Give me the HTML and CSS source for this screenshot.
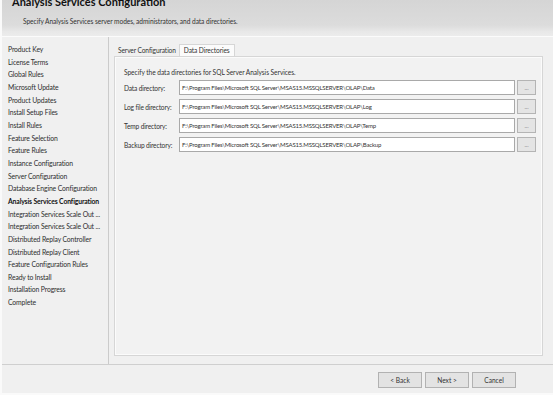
FILE: index.html
```html
<!DOCTYPE html>
<html lang="en">
<head>
  <meta charset="UTF-8" />
  <title>Analysis Services Configuration</title>
  <link rel="stylesheet" href="styles.css">
</head>
<body>
  <div class="window">
    <header class="header">
      <h1>Analysis Services Configuration</h1>
      <p>Specify Analysis Services server modes, administrators, and data directories.</p>
    </header>

    <div class="body">
      <nav class="steps">
        <div>Product Key</div>
        <div>License Terms</div>
        <div>Global Rules</div>
        <div>Microsoft Update</div>
        <div>Product Updates</div>
        <div>Install Setup Files</div>
        <div>Install Rules</div>
        <div>Feature Selection</div>
        <div>Feature Rules</div>
        <div>Instance Configuration</div>
        <div>Server Configuration</div>
        <div>Database Engine Configuration</div>
        <div class="current">Analysis Services Configuration</div>
        <div>Integration Services Scale Out ...</div>
        <div>Integration Services Scale Out ...</div>
        <div>Distributed Replay Controller</div>
        <div>Distributed Replay Client</div>
        <div>Feature Configuration Rules</div>
        <div>Ready to Install</div>
        <div>Installation Progress</div>
        <div>Complete</div>
      </nav>

      <main class="main">
        <div class="tabs">
          <span class="tab">Server Configuration</span>
          <span class="tab selected">Data Directories</span>
        </div>
        <div class="panel">
          <p class="intro">Specify the data directories for SQL Server Analysis Services.</p>
          <div class="row">
            <label>Data directory:</label>
            <div class="field">F:\Program Files\Microsoft SQL Server\MSAS15.MSSQLSERVER\OLAP\Data</div>
            <button class="browse">...</button>
          </div>
          <div class="row">
            <label>Log file directory:</label>
            <div class="field">F:\Program Files\Microsoft SQL Server\MSAS15.MSSQLSERVER\OLAP\Log</div>
            <button class="browse">...</button>
          </div>
          <div class="row">
            <label>Temp directory:</label>
            <div class="field">F:\Program Files\Microsoft SQL Server\MSAS15.MSSQLSERVER\OLAP\Temp</div>
            <button class="browse">...</button>
          </div>
          <div class="row">
            <label>Backup directory:</label>
            <div class="field">F:\Program Files\Microsoft SQL Server\MSAS15.MSSQLSERVER\OLAP\Backup</div>
            <button class="browse">...</button>
          </div>
        </div>
      </main>
    </div>

    <footer class="footer">
      <button class="btn">&lt; Back</button>
      <button class="btn">Next &gt;</button>
      <button class="btn">Cancel</button>
    </footer>
  </div>
</body>
</html>
```

FILE: styles.css
```css
body {
  margin: 0;
  font-family: 'Segoe UI', Lato, sans-serif;
  color: #2a2a2a;
  background: #f0f0f0;
  overflow: hidden;
}
.window {
  width: 553px;
  height: 395px;
  display: flex;
  flex-direction: column;
  box-sizing: border-box;
  border-left: 2px solid #fafafa;
  border-bottom: 2px solid #fafafa;
}
/* header */
.header {
  height: 37px;
  flex-shrink: 0;
  box-sizing: border-box;
  padding-left: 10px;
  background: linear-gradient(to bottom, #d5d5d5 0, #dcdcdc 70%, #e8e8e8 88%, #ececec 100%);
  border-bottom: 1px solid #fbfbfb;
  overflow: hidden;
}
.header h1 {
  margin: -6px 0 0 0;
  font-size: 11px;
  font-weight: bold;
  color: #111;
  line-height: 15px;
}
.header p {
  margin: 8px 0 0 11px;
  font-size: 6.6px;
  letter-spacing: -0.05px;
  line-height: 9px;
  color: #333;
}
/* body */
.body {
  flex: 1;
  display: flex;
  min-height: 0;
  border-bottom: 1px solid #cfcfcf;
}
.steps {
  width: 107px;
  flex-shrink: 0;
  padding: 6px 0 0 6px;
  box-sizing: border-box;
  border-right: 1px solid #cbcbcb;
  font-size: 6.8px;
  letter-spacing: -0.12px;
  line-height: 12.65px;
  color: #2e2e2e;
}
.steps .current {
  font-weight: bold;
  color: #111;
}
.main {
  flex: 1;
  display: flex;
  flex-direction: column;
  padding: 8px 10px 8px 5px;
  min-width: 0;
}
.tabs {
  display: flex;
  height: 11px;
  font-size: 6.6px;
  letter-spacing: -0.1px;
  line-height: 11px;
}
.tab {
  padding: 0 3px 0 4px;
  color: #333;
}
.tab.selected {
  background: #fbfbfb;
  border: 1px solid #d6d6d6;
  border-bottom: none;
  margin-top: -1px;
  height: 12px;
  padding: 0 4px;
}
.panel {
  flex: 1;
  border: 1px solid #d6d6d6;
  background: #f2f2f2;
  box-shadow: inset 0 0 0 1px #fbfbfb;
  padding: 10px 6px 0 9px;
}
.intro {
  margin: 0 0 3px 0;
  font-size: 6.6px;
  letter-spacing: -0.05px;
  line-height: 10px;
  color: #333;
}
.row {
  display: flex;
  align-items: center;
  height: 15px;
  margin-bottom: 4px;
}
.row label {
  width: 55px;
  flex-shrink: 0;
  font-size: 6.6px;
  letter-spacing: -0.15px;
  color: #333;
}
.field {
  flex: 1;
  height: 15px;
  box-sizing: border-box;
  border: 1px solid #a9a9a9;
  background: #fff;
  font-size: 6px;
  letter-spacing: -0.18px;
  line-height: 13px;
  padding-left: 2px;
  color: #333;
  white-space: nowrap;
  overflow: hidden;
}
.browse {
  width: 19px;
  height: 15px;
  margin-left: 2px;
  padding: 0;
  border: 1px solid #b4b4b4;
  background: #e4e4e4;
  font-family: inherit;
  font-size: 6px;
  line-height: 9px;
  color: #777;
}
/* footer */
.footer {
  height: 28px;
  flex-shrink: 0;
  display: flex;
  justify-content: flex-end;
  align-items: flex-start;
  gap: 3px;
  padding: 7px 37px 0 0;
  box-sizing: border-box;
}
.btn {
  width: 44px;
  height: 16px;
  padding: 0;
  border: 1px solid #b2b2b2;
  background: #e3e3e3;
  font-family: inherit;
  font-size: 6.6px;
  color: #333;
}
```
